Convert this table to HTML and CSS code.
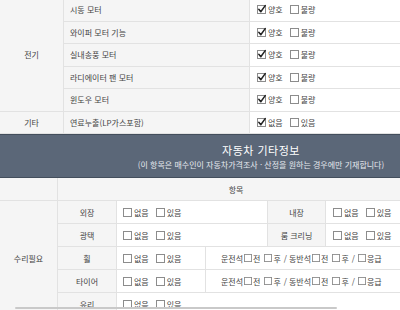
FILE: index.html
```html
<!DOCTYPE html>
<html lang="ko">
<head>
<meta charset="utf-8">
<link rel="stylesheet" href="styles.css">
</head>
<body>
<div class="sheet">
  <div class="grid top">
    <div class="cell center rs5">전기</div>
    <div class="cell">시동 모터</div>
    <div class="cell white val"><span class="opt"><svg class="box" viewBox="0 0 9 9"><rect x=".5" y=".5" width="8" height="8"/><path class="chk" d="M1.8 4.3 L3.8 6.8 L8.2 0.6"/></svg>양호</span><span class="opt"><svg class="box" viewBox="0 0 9 9"><rect x=".5" y=".5" width="8" height="8"/></svg>불량</span></div>
    <div class="cell">와이퍼 모터 기능</div>
    <div class="cell white val"><span class="opt"><svg class="box" viewBox="0 0 9 9"><rect x=".5" y=".5" width="8" height="8"/><path class="chk" d="M1.8 4.3 L3.8 6.8 L8.2 0.6"/></svg>양호</span><span class="opt"><svg class="box" viewBox="0 0 9 9"><rect x=".5" y=".5" width="8" height="8"/></svg>불량</span></div>
    <div class="cell">실내송풍 모터</div>
    <div class="cell white val"><span class="opt"><svg class="box" viewBox="0 0 9 9"><rect x=".5" y=".5" width="8" height="8"/><path class="chk" d="M1.8 4.3 L3.8 6.8 L8.2 0.6"/></svg>양호</span><span class="opt"><svg class="box" viewBox="0 0 9 9"><rect x=".5" y=".5" width="8" height="8"/></svg>불량</span></div>
    <div class="cell">라디에이터 팬 모터</div>
    <div class="cell white val"><span class="opt"><svg class="box" viewBox="0 0 9 9"><rect x=".5" y=".5" width="8" height="8"/><path class="chk" d="M1.8 4.3 L3.8 6.8 L8.2 0.6"/></svg>양호</span><span class="opt"><svg class="box" viewBox="0 0 9 9"><rect x=".5" y=".5" width="8" height="8"/></svg>불량</span></div>
    <div class="cell">윈도우 모터</div>
    <div class="cell white val"><span class="opt"><svg class="box" viewBox="0 0 9 9"><rect x=".5" y=".5" width="8" height="8"/><path class="chk" d="M1.8 4.3 L3.8 6.8 L8.2 0.6"/></svg>양호</span><span class="opt"><svg class="box" viewBox="0 0 9 9"><rect x=".5" y=".5" width="8" height="8"/></svg>불량</span></div>
    <div class="cell center">기타</div>
    <div class="cell">연료누출(LP가스포함)</div>
    <div class="cell white val"><span class="opt"><svg class="box" viewBox="0 0 9 9"><rect x=".5" y=".5" width="8" height="8"/><path class="chk" d="M1.8 4.3 L3.8 6.8 L8.2 0.6"/></svg>없음</span><span class="opt"><svg class="box" viewBox="0 0 9 9"><rect x=".5" y=".5" width="8" height="8"/></svg>있음</span></div>
  </div>

  <div class="band">
    <h2 class="band-title">자동차 기타정보</h2>
    <p class="band-sub">(이 항목은 매수인이 자동차가격조사 · 산정을 원하는 경우에만 기재합니다)</p>
  </div>

  <div class="grid bottom">
    <div class="cell center"></div>
    <div class="cell center cs5">항목</div>
    <div class="cell center"></div>

    <div class="cell center rs5">수리필요</div>

    <div class="cell center">외장</div>
    <div class="cell white cs2"><span class="opt"><svg class="box" viewBox="0 0 9 9"><rect x=".5" y=".5" width="8" height="8"/></svg>없음</span><span class="opt"><svg class="box" viewBox="0 0 9 9"><rect x=".5" y=".5" width="8" height="8"/></svg>있음</span></div>
    <div class="cell center">내장</div>
    <div class="cell white cs2 vale"><span class="opt"><svg class="box" viewBox="0 0 9 9"><rect x=".5" y=".5" width="8" height="8"/></svg>없음</span><span class="opt"><svg class="box" viewBox="0 0 9 9"><rect x=".5" y=".5" width="8" height="8"/></svg>있음</span></div>

    <div class="cell center">광택</div>
    <div class="cell white cs2"><span class="opt"><svg class="box" viewBox="0 0 9 9"><rect x=".5" y=".5" width="8" height="8"/></svg>없음</span><span class="opt"><svg class="box" viewBox="0 0 9 9"><rect x=".5" y=".5" width="8" height="8"/></svg>있음</span></div>
    <div class="cell center">룸 크리닝</div>
    <div class="cell white cs2 vale"><span class="opt"><svg class="box" viewBox="0 0 9 9"><rect x=".5" y=".5" width="8" height="8"/></svg>없음</span><span class="opt"><svg class="box" viewBox="0 0 9 9"><rect x=".5" y=".5" width="8" height="8"/></svg>있음</span></div>

    <div class="cell center">휠</div>
    <div class="cell white"><span class="opt"><svg class="box" viewBox="0 0 9 9"><rect x=".5" y=".5" width="8" height="8"/></svg>없음</span><span class="opt"><svg class="box" viewBox="0 0 9 9"><rect x=".5" y=".5" width="8" height="8"/></svg>있음</span></div>
    <div class="cell white cs4 seats">운전석<span class="opt tight"><svg class="box" viewBox="0 0 9 9"><rect x=".5" y=".5" width="8" height="8"/></svg>전</span><span class="opt tight"><svg class="box" viewBox="0 0 9 9"><rect x=".5" y=".5" width="8" height="8"/></svg>후</span><span class="sep">/</span>동반석<span class="opt tight"><svg class="box" viewBox="0 0 9 9"><rect x=".5" y=".5" width="8" height="8"/></svg>전</span><span class="opt tight"><svg class="box" viewBox="0 0 9 9"><rect x=".5" y=".5" width="8" height="8"/></svg>후</span><span class="sep">/</span><span class="opt tight"><svg class="box" viewBox="0 0 9 9"><rect x=".5" y=".5" width="8" height="8"/></svg>응급</span></div>

    <div class="cell center">타이어</div>
    <div class="cell white"><span class="opt"><svg class="box" viewBox="0 0 9 9"><rect x=".5" y=".5" width="8" height="8"/></svg>없음</span><span class="opt"><svg class="box" viewBox="0 0 9 9"><rect x=".5" y=".5" width="8" height="8"/></svg>있음</span></div>
    <div class="cell white cs4 seats">운전석<span class="opt tight"><svg class="box" viewBox="0 0 9 9"><rect x=".5" y=".5" width="8" height="8"/></svg>전</span><span class="opt tight"><svg class="box" viewBox="0 0 9 9"><rect x=".5" y=".5" width="8" height="8"/></svg>후</span><span class="sep">/</span>동반석<span class="opt tight"><svg class="box" viewBox="0 0 9 9"><rect x=".5" y=".5" width="8" height="8"/></svg>전</span><span class="opt tight"><svg class="box" viewBox="0 0 9 9"><rect x=".5" y=".5" width="8" height="8"/></svg>후</span><span class="sep">/</span><span class="opt tight"><svg class="box" viewBox="0 0 9 9"><rect x=".5" y=".5" width="8" height="8"/></svg>응급</span></div>

    <div class="cell center">유리</div>
    <div class="cell white cs5"><span class="opt"><svg class="box" viewBox="0 0 9 9"><rect x=".5" y=".5" width="8" height="8"/></svg>없음</span><span class="opt"><svg class="box" viewBox="0 0 9 9"><rect x=".5" y=".5" width="8" height="8"/></svg>있음</span></div>
  </div>
</div>
<div class="hscroll"></div>
</body>
</html>
```

FILE: styles.css
```css
* { box-sizing: border-box; }
html, body { margin: 0; padding: 0; overflow: hidden; background: #fff; }
body {
  font-family: "Noto Sans CJK KR", "Noto Sans", sans-serif;
  font-size: 8px;
  color: #444;
}
.sheet { width: 522px; margin-top: -1px; }
.grid { display: grid; }
.top {
  grid-template-columns: 64px 186px 272px;
  grid-auto-rows: 22.5px;
}
.bottom {
  grid-template-columns: 58px 59px 89px 62px 58px 89px 107px;
  grid-auto-rows: 23px;
}
.cell {
  display: flex;
  align-items: center;
  white-space: nowrap;
  background: #f5f5f5;
  border-right: 1px solid #e2e2e2;
  border-bottom: 1px solid #e2e2e2;
  padding-left: 6px;
}
.center { justify-content: center; padding-left: 0; }
.white { background: #fff; }
.val { padding-left: 7px; }
.vale { padding-left: 7px; }
.seats { padding-left: 15px; }
.rs5 { grid-row: span 5; }
.cs2 { grid-column: span 2; }
.cs4 { grid-column: span 4; }
.cs5 { grid-column: span 5; }

.opt { display: inline-flex; align-items: center; margin-right: 7px; }
.opt.tight { margin-right: 3px; margin-left: 0; }
.box { width: 9px; height: 9px; margin-right: 2px; overflow: visible; }
.opt.tight .box { width: 8px; height: 8px; margin-right: 1px; margin-left: 1px; }
.box rect { fill: #fff; stroke: #8c8c8c; stroke-width: 1; }
.box .chk { fill: none; stroke: #222; stroke-width: 1.5; stroke-linecap: round; stroke-linejoin: round; }
.sep { margin: 0 2px 0 0; }

.band {
  height: 44px;
  background: #5b6778;
  border-top: 1px solid #434e5c;
  border-bottom: 1px solid #434e5c;
  text-align: center;
  padding-top: 8px;
}
.band-title {
  margin: 0;
  font-size: 11px;
  line-height: 14px;
  font-weight: 400;
  color: #fff;
  letter-spacing: 0.5px;
}
.band-sub {
  margin: 2px 0 0;
  font-size: 8px;
  line-height: 11px;
  color: #e6e9ee;
}
.hscroll {
  position: fixed;
  left: 15px;
  top: 307px;
  width: 322px;
  height: 2px;
  background: #c9c9c9;
  border-radius: 1px;
}
```
